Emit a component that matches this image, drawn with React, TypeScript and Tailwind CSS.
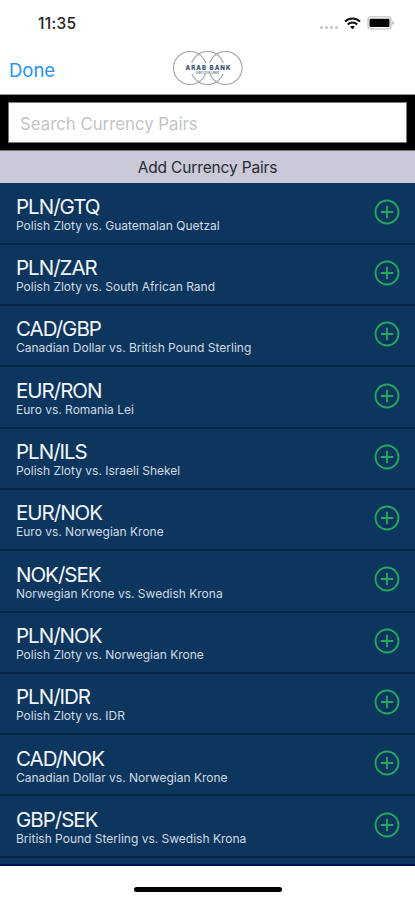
type CurrencyPair = {
  symbol: string;
  description: string;
};

const pairs: CurrencyPair[] = [
  { symbol: 'PLN/GTQ', description: 'Polish Zloty vs. Guatemalan Quetzal' },
  { symbol: 'PLN/ZAR', description: 'Polish Zloty vs. South African Rand' },
  { symbol: 'CAD/GBP', description: 'Canadian Dollar vs. British Pound Sterling' },
  { symbol: 'EUR/RON', description: 'Euro vs. Romania Lei' },
  { symbol: 'PLN/ILS', description: 'Polish Zloty vs. Israeli Shekel' },
  { symbol: 'EUR/NOK', description: 'Euro vs. Norwegian Krone' },
  { symbol: 'NOK/SEK', description: 'Norwegian Krone vs. Swedish Krona' },
  { symbol: 'PLN/NOK', description: 'Polish Zloty vs. Norwegian Krone' },
  { symbol: 'PLN/IDR', description: 'Polish Zloty vs. IDR' },
  { symbol: 'CAD/NOK', description: 'Canadian Dollar vs. Norwegian Krone' },
  { symbol: 'GBP/SEK', description: 'British Pound Sterling vs. Swedish Krona' },
];

const StatusBar = () => (
  <div className="flex h-[46px] shrink-0 items-center justify-between pl-[38px] pr-[20px]">
    <span className="pt-px text-[15.5px] font-medium leading-5 tracking-[0.3px] text-[#222]">11:35</span>
    <div className="flex items-center">
      <div className="mt-[8px] flex gap-[2px]">
        <span className="size-[3px] rounded-full bg-[#c4c4c4]" />
        <span className="size-[3px] rounded-full bg-[#c4c4c4]" />
        <span className="size-[3px] rounded-full bg-[#c4c4c4]" />
        <span className="size-[3px] rounded-full bg-[#c4c4c4]" />
      </div>
      <svg className="ml-[6px]" width="17" height="13" viewBox="0 0 17 13" fill="none" stroke="#111" strokeWidth="2.1">
        <path d="M1 4.6C5.2.4 11.8.4 16 4.6" />
        <path d="M3.8 7.5c2.7-2.6 6.7-2.6 9.4 0" />
        <path d="M8.5 12.3 6 9.8c1.5-1.3 3.5-1.3 5 0Z" fill="#111" stroke="none" />
      </svg>
      <svg className="ml-[6px]" width="28" height="14" viewBox="0 0 28 14">
        <rect x="1" y=".8" width="23" height="12.2" rx="3" fill="#fff" stroke="#cfcfcf" strokeWidth="1.6" />
        <rect x="2.5" y="2.8" width="20" height="8.2" rx="1.2" fill="#050505" />
        <path d="M25.4 4.7c2 .8 2 3.4 0 4.2Z" fill="#aaa" />
      </svg>
    </div>
  </div>
);

const Logo = () => (
  <svg className="ml-px" width="72" height="36" viewBox="0 0 72 36" fill="none">
    <g stroke="#a2a2a6" strokeWidth="1.1">
      <circle cx="18" cy="18" r="16.5" />
      <circle cx="35.5" cy="18" r="16.5" />
      <circle cx="53.5" cy="18" r="16.5" />
    </g>
    <rect x="12" y="13" width="48" height="11" fill="#fff" />
    <text x="13.5" y="20" fontSize="6" fontWeight="800" fill="#324b70" textLength="45">
      ARAB BANK
    </text>
    <text x="24" y="24.2" fontSize="2.8" fontWeight="700" fill="#687b96" textLength="23">
      SWITZERLAND
    </text>
  </svg>
);

const NavBar = () => (
  <div className="grid h-[49px] shrink-0 grid-cols-3 items-center border-b border-[#999]">
    <button className="pl-[9px] text-left text-[18.5px] leading-6 text-[#2493fb]">Done</button>
    <div className="flex justify-center pb-[4px]">
      <Logo />
    </div>
  </div>
);

const AddIcon = () => (
  <svg width="26" height="26" viewBox="0 0 26 26" fill="none" stroke="#26a85c">
    <circle cx="13" cy="13" r="11.5" strokeWidth="1.8" />
    <path d="M13 6.8v12.4M6.8 13h12.4" strokeWidth="1.8" />
  </svg>
);

const PairRow = ({ pair }: { pair: CurrencyPair }) => (
  <li className="flex h-[61.3px] shrink-0 items-center justify-between border-b-2 border-[#062847] pl-[16px] pr-[15px]">
    <div className="pt-[1.4px]">
      <div className="text-[20.5px] leading-[24px] tracking-[-1px] text-[#f4f6fa]">{pair.symbol}</div>
      <div className="text-[12px] leading-[14px] text-[#d3dbe6]">{pair.description}</div>
    </div>
    <button aria-label={`Add ${pair.symbol}`} className="pb-[3px]">
      <AddIcon />
    </button>
  </li>
);

const App = () => {
  return (
    <div className="flex h-[900px] w-[415px] flex-col overflow-hidden bg-white font-['Inter','Liberation_Sans',sans-serif]">
      <StatusBar />
      <NavBar />
      <div className="h-[56px] shrink-0 border-b border-[#777] bg-black px-[8px] pt-[7px]">
        <input
          type="text"
          placeholder="Search Currency Pairs"
          className="block h-[41px] w-full border border-[#777] bg-white px-[11px] pt-[2px] text-[16.8px] outline-none placeholder:text-[#c4c4c6]"
        />
      </div>
      <h1 className="h-[32px] shrink-0 bg-[#c9c9d7] text-center text-[15.5px] leading-[33px] tracking-[-0.15px] text-[#292a33]">
        Add Currency Pairs
      </h1>
      <ul className="flex h-[683px] shrink-0 flex-col overflow-hidden border-b-2 border-[#000f50] bg-[#0c365e] pt-[0.5px]">
        {pairs.map((pair) => (
          <PairRow key={pair.symbol} pair={pair} />
        ))}
      </ul>
      <div className="flex flex-1 justify-center pt-[21px]">
        <div className="h-[5px] w-[148px] rounded-full bg-black" />
      </div>
    </div>
  );
};

export default App;
